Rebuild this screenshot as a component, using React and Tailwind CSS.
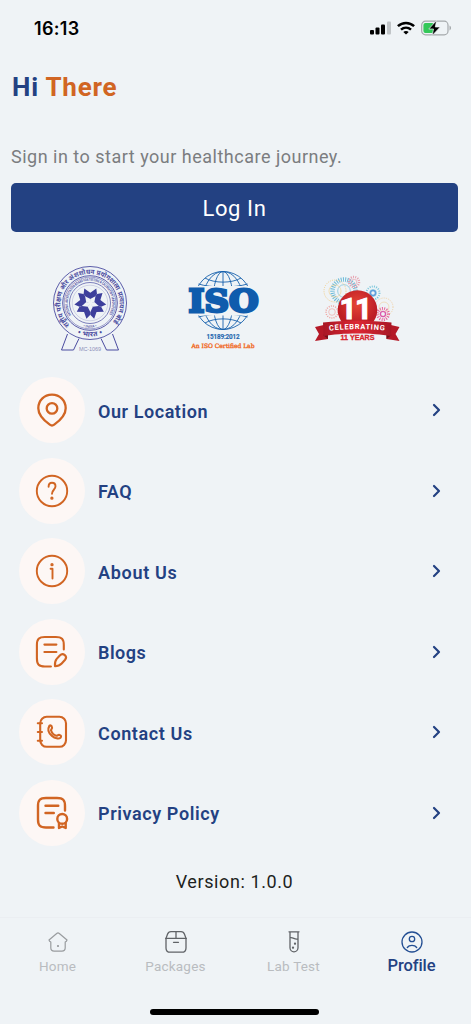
import React from 'react';

const Icon = ({ children, size = 36, width = 2.1, className = '' }) => (
  <svg
    width={size}
    height={size}
    viewBox="0 0 36 36"
    fill="none"
    stroke="currentColor"
    strokeWidth={width}
    strokeLinecap="round"
    strokeLinejoin="round"
    className={className}
  >
    {children}
  </svg>
);

const LocationIcon = () => (
  <Icon width={2.3}>
    <path d="M18 2.7C10 2.7 4.3 8.7 4.3 16.2c0 7 5.6 12.200 11.500 16.400 1.400 1.100 3 1.100 4.400 0 5.900-4.200 11.500-9.400 11.500-16.400C31.700 8.700 26 2.700 18 2.700Z" />
    <circle cx="18" cy="16.400" r="5.300" />
  </Icon>
);

const FaqIcon = () => (
  <Icon width={1.9}>
    <circle cx="18" cy="18" r="15.200" />
    <path d="M14.600 13.700c0-2.500 1.400-3.900 3.400-3.900s3.500 1.400 3.500 3.500c0 3.400-3.500 3.600-3.500 7.500" />
    <circle cx="17.900" cy="25.200" r="0.700" fill="currentColor" />
  </Icon>
);

const InfoIcon = () => (
  <Icon width={1.9}>
    <circle cx="18" cy="18" r="15.200" />
    <path d="M16.600 15.700h1.900v9.900" />
    <circle cx="18" cy="11.700" r="0.700" fill="currentColor" />
  </Icon>
);

const BlogIcon = () => (
  <Icon width={2.1}>
    <path d="M29.800 15.500V11c0-6-2-8-8-8H10.900c-6 0-8 2-8 8v13.500c0 6 2 8 8 8h6" />
    <path d="M10.400 10.600h12M10.400 18h12" />
    <path d="M21 32.200c-.3-3 .2-5.500 1.700-7.300l3.100-3.400c1.600-1.600 3.400-1.700 5-.4 1.500 1.400 1.600 3.200.3 4.700l-3.400 3.700c-1.800 1.900-3.800 2.700-6.700 2.700Z" />
  </Icon>
);

const ContactIcon = () => (
  <Icon width={2.1}>
    <rect x="6.200" y="2.800" width="25.800" height="30" rx="6.500" />
    <path d="M3.800 9.200H8M3.800 18H8M3.800 26.700H8" />
    <path d="M15.500 11.600c1.100-.8 2.100.2 2.500 1.500.5 1.400-.9 2-1 3.200.9 2.900 2.800 4.800 5.600 5.500 1-.2 1.600-1.300 3-.8 1.600.5 1.900 1.700.9 2.700-3.400 3.300-15.700-4-11-12.100Z" />
  </Icon>
);

const PolicyIcon = () => (
  <Icon width={2.4}>
    <path d="M31 15.500V11c0-6-2-8-8-8H12c-6 0-8 2-8 8v13.500c0 6 2 8 8 8h7.500" />
    <path d="M11.500 10.700h12.800M11.500 18h8.300" />
    <circle cx="28.200" cy="23.900" r="4.900" />
    <path d="M25 28v5l3.200-1.500 3.500 1.500v-5" />
  </Icon>
);

const menuItems = [
  { label: 'Our Location', icon: LocationIcon, spacing: 'tracking-[0.56px]' },
  { label: 'FAQ', icon: FaqIcon, spacing: 'tracking-[0.5px]' },
  { label: 'About Us', icon: InfoIcon, spacing: 'tracking-[0.7px]' },
  { label: 'Blogs', icon: BlogIcon, spacing: 'tracking-[0.5px]' },
  { label: 'Contact Us', icon: ContactIcon, spacing: 'tracking-[0.62px]' },
  { label: 'Privacy Policy', icon: PolicyIcon, spacing: 'tracking-[0.6px]' },
];

const StatusBar = () => (
  <div className="flex h-14 items-center justify-between pl-[34px] pr-[19px] text-black">
    <span className="font-['Inter'] text-[18px] font-semibold tracking-[0.3px]">16:13</span>
    <div className="flex items-center gap-1.5">
      <svg width="21" height="14" viewBox="0 0 21 14">
        <rect x="0" y="9" width="4" height="4.500" rx="1" />
        <rect x="5.500" y="6.500" width="4" height="7" rx="1" />
        <rect x="11" y="3.500" width="4" height="10" rx="1" />
        <rect x="17" y="0.500" width="4" height="13" rx="1" fill="#c0c4c7" />
      </svg>
      <svg width="18" height="14" viewBox="0 0 18 14" fill="none" stroke="#000" strokeWidth="2.500">
        <path d="M.9 5.200c4.600-4.400 11.600-4.400 16.200 0M4 8.600c2.900-2.600 7.100-2.600 10 0" />
        <path d="M9 13.500 6.300 10.900c1.500-1.300 3.900-1.300 5.400 0Z" fill="#000" stroke="none" />
      </svg>
      <svg width="31" height="16" viewBox="0 0 31 16">
        <rect x="0.700" y="1.200" width="26.300" height="13.600" rx="3.800" fill="none" stroke="#a5a9ac" strokeWidth="1.200" />
        <path d="M28.500 5.600c2 .8 2 4 0 4.800Z" fill="#a5a9ac" />
        <rect x="2.400" y="3" width="10.500" height="10" rx="2" fill="#34c759" />
        <path d="M15.500.5 7.800 9h4.700l-1.300 6.500L19.200 7h-4.900Z" fill="#000" stroke="#eff3f6" strokeWidth="0.700" />
      </svg>
    </div>
  </div>
);

const SealLogo = () => (
  <svg width="80" height="90" viewBox="0 0 80 90" fill="none" stroke="#4b4ca0" className="font-['Noto_Sans']">
    <defs>
      <path id="seal-outer" d="M19.700 61.900A29.500 29.500 0 1 1 60.300 61.900" />
      <path id="seal-foot" d="M20 67A34 34 0 0 0 60 67" />
      <path id="seal-inner" d="M21.300 52.200A22.300 22.300 0 1 1 58.700 52.200" />
      <path id="seal-india" d="M22 57A25 25 0 0 0 58 57" />
    </defs>
    <circle cx="40" cy="40" r="36.500" strokeWidth="0.900" />
    <circle cx="40" cy="40" r="27.300" strokeWidth="0.900" />
    <circle cx="40" cy="40" r="25.900" strokeWidth="0.500" />
    <circle cx="40" cy="40" r="20.500" strokeWidth="0.700" />
    <g fill="#4b4ca0" stroke="none">
      <text fontSize="6.800" fontWeight="700">
        <textPath href="#seal-outer" textLength="136" lengthAdjust="spacingAndGlyphs">राष्ट्रीय परीक्षण और अंशशोधन प्रयोगशाला प्रत्यायन बोर्ड</textPath>
      </text>
      <text fontSize="7" fontWeight="700" textAnchor="middle">
        <textPath href="#seal-foot" startOffset="50%" textLength="26">• भारत •</textPath>
      </text>
      <text fontSize="3.600" fontWeight="700">
        <textPath href="#seal-inner" textLength="94" lengthAdjust="spacingAndGlyphs">NATIONAL ACCREDITATION BOARD FOR TESTING &amp; CALIBRATION LABORATORIES</textPath>
      </text>
      <text fontSize="3.200" fontWeight="600" textAnchor="middle">
        <textPath href="#seal-india" startOffset="50%">• INDIA •</textPath>
      </text>
    </g>
    {/* emblem: five notched arms around a star shaped hole */}
    <g transform="translate(40.300 40.300)" stroke="none">
      {[0, 72, 144, 216, 288].map((angle) => (
        <path
          key={angle}
          transform={`rotate(${angle})`}
          fill="#3d3f9c"
          d="M-6-14.800 0-10.600 6-14.800 6.700-9.200 0 0-6.700-9.200Z"
        />
      ))}
      <g fill="#eff3f6">
        {[36, 108, 180, 252, 324].map((angle) => (
          <path key={angle} transform={`rotate(${angle})`} d="M0-8.800 2.600-3.400 0 0.600-2.600-3.400Z" />
        ))}
      </g>
    </g>
    <circle cx="40" cy="40" r="17.800" strokeWidth="0.400" opacity="0.500" />
    <path d="M17.500 71 11.500 87H23.500L29 75.500M62.500 71 68.500 87H56.500L51 75.500" strokeWidth="1" />
    <text x="40" y="88" fontSize="5.500" textAnchor="middle" fill="#8d8fba" stroke="none" textLength="22" className="font-['Liberation_Sans']">MC-1069</text>
  </svg>
);

const IsoLogo = () => (
  <svg width="80" height="94" viewBox="0 0 80 94" className="overflow-visible">
    <g fill="none" stroke="#1761ad" strokeWidth="0.900">
      <ellipse cx="40" cy="37.500" rx="28.500" ry="29" />
      <ellipse cx="40" cy="37.500" rx="20" ry="29" />
      <ellipse cx="40" cy="37.500" rx="10" ry="29" />
      <path d="M40 8.500v58M22 15c9 5.500 27 5.500 36 0M15.500 21c13 4 36 4 49 0M15.500 54c13-4 36-4 49 0M22 60c9-5.500 27-5.500 36 0" />
    </g>
    <rect x="3" y="23" width="74" height="29.500" fill="#eff3f6" />
    <text
      x="5.500"
      y="49.300"
      fontSize="32.500"
      fontWeight="700"
      textLength="70"
      lengthAdjust="spacingAndGlyphs"
      fill="#0f5cad"
      stroke="#0f5cad"
      strokeWidth="2.900"
      className="font-['DejaVu_Serif']"
    >
      ISO
    </text>
    <text x="40" y="76" fontSize="6.300" fontWeight="500" textAnchor="middle" fill="#1761ad" stroke="#1761ad" strokeWidth="0.200" textLength="33" className="font-['Roboto']">15189:2012</text>
    <text x="40" y="85" fontSize="6" textAnchor="middle" fill="#f0702e" stroke="#f0702e" strokeWidth="0.400" textLength="63" lengthAdjust="spacingAndGlyphs" className="font-['DejaVu_Serif']">An ISO Certified Lab</text>
  </svg>
);

const fireworks = [
  { x: 30, y: 22, r: 11.5, color: '#69bad8', width: 4.5 },
  { x: 40, y: 13, r: 5, color: '#e7a0ae', width: 2.5 },
  { x: 59, y: 24, r: 6.5, color: '#79c6dc', width: 2 },
  { x: 69, y: 45, r: 5.5, color: '#e8669b', width: 3 },
  { x: 18, y: 43, r: 6, color: '#efa3a0', width: 1.5 },
  { x: 21, y: 22, r: 11, color: '#f2cf8b', width: 1 },
  { x: 70, y: 38, r: 9, color: '#f1d0a1', width: 1 },
];

const AnniversaryLogo = () => (
  <svg width="86" height="90" viewBox="0 0 86 90">
    <defs>
      <radialGradient id="ball" cx="50%" cy="35%">
        <stop offset="0" stopColor="#e64635" />
        <stop offset="1" stopColor="#bd1d25" />
      </radialGradient>
      <linearGradient id="ribbon">
        <stop offset="0" stopColor="#a81725" />
        <stop offset="0.500" stopColor="#dc2733" />
        <stop offset="1" stopColor="#a81725" />
      </linearGradient>
      <path id="ribbon-text" d="M15.500 61.700C31 59.700 55 59.700 71.500 61.700" />
    </defs>
    <g fill="none">
      {fireworks.map((f) => (
        <g key={`${f.x}-${f.y}`} stroke={f.color}>
          <circle cx={f.x} cy={f.y} r={f.r} strokeWidth={f.width} strokeDasharray="1 1.200" />
          <circle cx={f.x} cy={f.y} r={f.r * 0.55} strokeWidth="0.800" opacity="0.800" />
        </g>
      ))}
      <circle cx="59" cy="24" r="2.500" stroke="#5e9edb" strokeWidth="1.500" />
      <circle cx="69" cy="45" r="2.500" stroke="#d957ae" strokeWidth="1.200" />
    </g>
    <circle cx="43.500" cy="41" r="19.800" fill="url(#ball)" />
    <text x="25.500 41" y="50.200" fontSize="30" fontWeight="700" fill="#fff" stroke="#fff" strokeWidth="1" className="font-['Roboto']">11</text>
    <path d="M1 58 14 55V70L1 72l4-7ZM85.500 58 72.500 55V70L85.500 72l-4-7Z" fill="#b41927" />
    <path d="M9 66 14 63V70ZM77.500 66 72.500 63V70Z" fill="#731019" />
    <path d="M9 53.500C30 51.300 56 51.300 77.500 53.500L77 67C58 63.500 28 63.500 9.500 67Z" fill="url(#ribbon)" />
    <text fontSize="7.500" fontWeight="700" fill="#fff" className="font-['Roboto']">
      <textPath href="#ribbon-text" startOffset="0" textLength="55">CELEBRATING</textPath>
    </text>
    <text x="43.500" y="71" fontSize="6.800" fontWeight="700" textAnchor="middle" textLength="34" lengthAdjust="spacingAndGlyphs" fill="#d9252d" stroke="#d9252d" strokeWidth="0.300" className="font-['Liberation_Sans']">11 YEARS</text>
  </svg>
);

const MenuRow = ({ label, icon: RowIcon, spacing }) => (
  <li>
    <button className="flex w-full items-center text-left">
      <span className="flex size-[66px] shrink-0 items-center justify-center rounded-full bg-[#fdf7f5] text-[#d16523]">
        <RowIcon />
      </span>
      <span className={`ml-[13px] flex-1 pt-0.5 text-[18px] font-semibold text-[#234182] ${spacing}`}>{label}</span>
      <svg width="10" height="14" viewBox="0 0 10 14" fill="none" stroke="#234182" strokeWidth="2.200" strokeLinecap="round" strokeLinejoin="round">
        <path d="m2 2 5 5-5 5" />
      </svg>
    </button>
  </li>
);

const HomeIcon = () => (
  <svg width="22" height="22" viewBox="0 0 22 22" fill="none" stroke="#999c9f" strokeWidth="1.200" strokeLinecap="round" strokeLinejoin="round">
    <path d="m2 9 7.700-6.500c.8-.7 1.800-.7 2.600 0L20 9l-.6 1.200-1.200.7v5.900c0 2.100-1.200 3.300-3.300 3.300H7.100c-2.100 0-3.300-1.200-3.300-3.300v-5.900L2.600 10.200Z" />
    <circle cx="11" cy="15" r="0.500" fill="#999c9f" />
  </svg>
);

const PackageIcon = () => (
  <svg width="22" height="22" viewBox="0 0 22 22" fill="none" stroke="#606367" strokeWidth="1.300" strokeLinecap="round" strokeLinejoin="round">
    <path d="M.7 7.400h20.600M11 .8v6.600M8.500 11.300h5" />
    <path d="M1 7.400v9.500c0 3 1.300 4.300 4.300 4.300h11.400c3 0 4.300-1.300 4.300-4.300V7.400l-1.500-4.200C18.900 1.500 17.700.7 16 .7H6C4.300.7 3.100 1.500 2.500 3.200Z" />
  </svg>
);

const TubeIcon = () => (
  <svg width="22" height="22" viewBox="0 0 22 22" fill="none" stroke="#606367" strokeWidth="1.300" strokeLinecap="round">
    <path d="M6 .8h10M7 .8v16a4 4 0 0 0 8 0V.8M7 6.800c3-1 5 2.500 8 1" />
    <circle cx="12" cy="12.700" r="0.500" fill="#606367" />
    <circle cx="10" cy="16.700" r="0.500" fill="#606367" />
  </svg>
);

const ProfileIcon = () => (
  <svg width="22" height="22" viewBox="0 0 22 22" fill="none" stroke="#234e93" strokeWidth="1.300" strokeLinecap="round">
    <circle cx="11" cy="11" r="10" />
    <circle cx="11" cy="8" r="2.700" />
    <path d="M6.300 16.500c2-2.800 7.400-2.800 9.400 0" />
  </svg>
);

const tabs = [
  { label: 'Home', icon: HomeIcon },
  { label: 'Packages', icon: PackageIcon },
  { label: 'Lab Test', icon: TubeIcon },
  { label: 'Profile', icon: ProfileIcon, active: true },
];

const App = () => {
  return (
    <div className="flex h-[1024px] w-full flex-col overflow-hidden bg-[#eff3f6] font-['Roboto',sans-serif]">
      <StatusBar />

      <header className="px-3 pt-[13px]">
        <h1 className="text-[26px] font-bold leading-9 tracking-[0.8px] text-[#234182]">
          Hi <span className="text-[#d16523]">There</span>
        </h1>
      </header>

      <section className="px-[11px] pt-10">
        <p className="h-6 text-[18px] leading-6 tracking-[0.5px] text-[#7b7d80]">Sign in to start your healthcare journey.</p>
        <button className="mt-3.5 flex h-[49px] w-[447px] items-center justify-center rounded-[5px] bg-[#234182] pt-0.5 text-[22px] tracking-[0.6px] text-white">
          Log In
        </button>
      </section>

      <section className="mt-[31px] flex h-[90px] pl-[50px]">
        <SealLogo />
        <div className="ml-[53px]">
          <IsoLogo />
        </div>
        <div className="ml-[51px] mt-[6px]">
          <AnniversaryLogo />
        </div>
      </section>

      <ul className="mt-[24px] flex flex-col gap-[14.6px] pl-[19px] pr-[29px]">
        {menuItems.map((item) => (
          <MenuRow key={item.label} {...item} />
        ))}
      </ul>

      <p className="mt-[22px] pr-0.5 text-center text-[18px] leading-7 tracking-[0.6px] text-[#1d1f21]">Version: 1.0.0</p>

      <div className="mt-auto">
        <nav className="-ml-[1.5px] flex h-[92px] border-t border-[#ebeef2] pt-[13px]">
          {tabs.map(({ label, icon: TabIcon, active }) => (
            <button key={label} className="flex w-[118px] shrink-0 flex-col items-center">
              <TabIcon />
              <span
                className={
                  active
                    ? 'text-[16.500px] font-medium leading-[25px] tracking-[-0.1px] text-[#234182]'
                    : 'mt-[3px] text-[13.500px] leading-5 tracking-[0.200px] text-[#b9bcc0]'
                }
              >
                {label}
              </span>
            </button>
          ))}
        </nav>
        <div className="ml-[150px] mb-[9px] h-1.5 w-[169px] rounded-full bg-black" />
      </div>
    </div>
  );
};

export default App;
